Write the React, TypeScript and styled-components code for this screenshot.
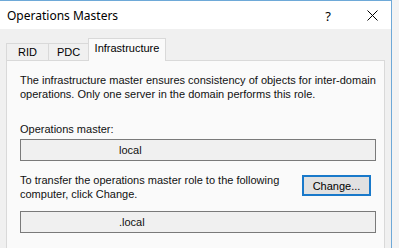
import styled, { createGlobalStyle } from "styled-components";

const Global = createGlobalStyle`
  html, body {
    margin: 0;
    padding: 0;
    background: #f3f3f3;
    overflow: hidden;
  }
  body {
    font-family: "Liberation Sans", Arial, sans-serif;
    color: #000;
  }
`;

const Screen = styled.div`
  width: 399px;
  height: 248px;
  display: flex;
`;

const Window = styled.div`
  width: 391px;
  height: 247px;
  border-top: 1px solid #6ea9d8;
  border-right: 1px solid #6ea9d8;
  display: flex;
  flex-direction: column;
  background: #f0f0f0;
`;

const TitleBar = styled.div`
  height: 28px;
  background: #fff;
  display: flex;
  align-items: center;
  padding: 0 0 0 7px;
  font-family: "Noto Sans", "Liberation Sans", sans-serif;
  font-size: 12px;
`;

const Title = styled.span`
  flex: 1;
  margin-top: 1px;
`;

const CaptionButton = styled.span<{ $w: number }>`
  width: ${(p) => p.$w}px;
  display: flex;
  justify-content: center;
  align-items: center;
  margin-top: 1px;
  font-size: 13px;
`;

const Client = styled.div`
  flex: 1;
  padding: 10px 6px 0 6px;
  display: flex;
  flex-direction: column;
`;

const TabRow = styled.div`
  display: flex;
  align-items: flex-end;
  height: 22px;
  position: relative;
  z-index: 1;
  margin-bottom: -1px;
`;

const Tab = styled.div<{ $active?: boolean; $w: number }>`
  width: ${(p) => p.$w}px;
  height: ${(p) => (p.$active ? 23 : 18)}px;
  box-sizing: border-box;
  border: 1px solid #d9d9d9;
  border-bottom: ${(p) => (p.$active ? "none" : "1px solid #d9d9d9")};
  margin-left: -1px;
  background: ${(p) => (p.$active ? "#fafafa" : "#f0f0f0")};
  display: flex;
  justify-content: center;
  align-items: center;
  padding-bottom: ${(p) => (p.$active ? 5 : 0)}px;
  font-size: 11px;
  &:first-child {
    margin-left: 0;
  }
`;

const Panel = styled.div`
  flex: 1;
  border: 1px solid #d9d9d9;
  border-bottom: none;
  background: #fafafa;
  padding: 11px 8px 0 13px;
  font-size: 11px;
  line-height: 13px;
  color: #111;
`;

const Para = styled.p<{ $mt?: number; $lh?: number }>`
  margin: ${(p) => p.$mt ?? 0}px 0 0 0;
  line-height: ${(p) => p.$lh ?? 13}px;
  white-space: nowrap;
`;

const ReadOnlyBox = styled.div<{ $mt?: number }>`
  margin-top: ${(p) => p.$mt ?? 0}px;
  height: 22px;
  box-sizing: border-box;
  border: 1px solid #7a7a7a;
  background: #f0f0f0;
  padding-left: 98px;
  display: flex;
  align-items: center;
`;

const TransferRow = styled.div`
  display: flex;
  justify-content: space-between;
  align-items: flex-start;
  margin-top: 12px;
`;

const Button = styled.button`
  width: 69px;
  height: 21px;
  margin: 2px 5px 0 0;
  box-sizing: border-box;
  border: 2px solid #1979ca;
  background: #e1e1e1;
  font-family: "Liberation Sans", Arial, sans-serif;
  font-size: 11px;
  padding: 0;
  color: #000;
`;

export default function App() {
  return (
    <Screen>
      <Global />
      <Window>
        <TitleBar>
          <Title>Operations Masters</Title>
          <CaptionButton $w={50}>?</CaptionButton>
          <CaptionButton $w={38}>
            <svg width="11" height="11" viewBox="0 0 11 11">
              <path d="M0.5 0.5 L10.5 10.5 M10.5 0.5 L0.5 10.5" stroke="#000" strokeWidth="1" />
            </svg>
          </CaptionButton>
        </TitleBar>
        <Client>
          <TabRow>
            <Tab $w={43}>RID</Tab>
            <Tab $w={41}>PDC</Tab>
            <Tab $w={78} $active>Infrastructure</Tab>
          </TabRow>
          <Panel>
            <Para $mt={1} $lh={14}>
              The infrastructure master ensures consistency of objects for inter-domain
              <br />
              operations. Only one server in the domain performs this role.
            </Para>
            <Para $mt={22}>Operations master:</Para>
            <ReadOnlyBox $mt={3}>local</ReadOnlyBox>
            <TransferRow>
              <Para $lh={14}>
                To transfer the operations master role to the following
                <br />
                computer, click Change.
              </Para>
              <Button>Change...</Button>
            </TransferRow>
            <ReadOnlyBox $mt={10}>.local</ReadOnlyBox>
          </Panel>
        </Client>
      </Window>
    </Screen>
  );
}
